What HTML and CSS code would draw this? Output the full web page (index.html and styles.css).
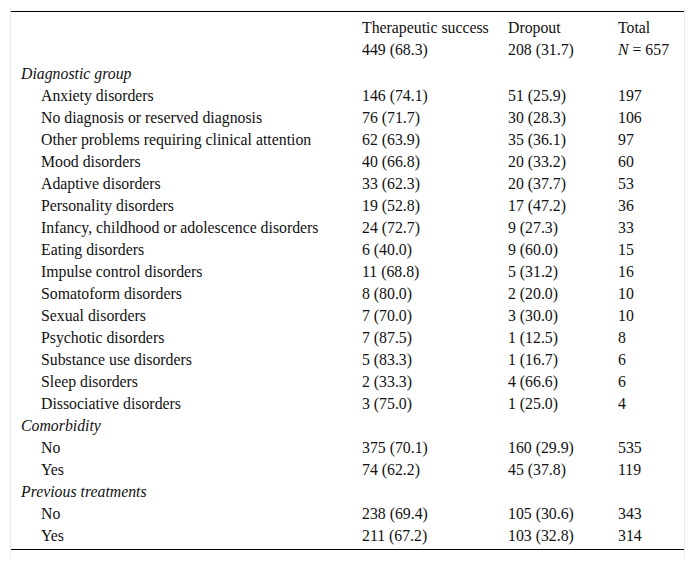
FILE: index.html
```html
<!DOCTYPE html>
<html>
<head>
<meta charset="utf-8">
<link rel="stylesheet" href="styles.css">
</head>
<body>
<div class="wrap">
<table class="data">
<colgroup>
<col class="c1"><col class="c2"><col class="c3"><col class="c4">
</colgroup>
<thead>
<tr>
<th></th>
<th>Therapeutic success<br>449 (68.3)</th>
<th>Dropout<br>208 (31.7)</th>
<th>Total<br><i>N</i> = 657</th>
</tr>
</thead>
<tbody>
<tr class="group"><td><i>Diagnostic group</i></td><td></td><td></td><td></td></tr>
<tr><td class="ind">Anxiety disorders</td><td>146 (74.1)</td><td>51 (25.9)</td><td>197</td></tr>
<tr><td class="ind">No diagnosis or reserved diagnosis</td><td>76 (71.7)</td><td>30 (28.3)</td><td>106</td></tr>
<tr><td class="ind">Other problems requiring clinical attention</td><td>62 (63.9)</td><td>35 (36.1)</td><td>97</td></tr>
<tr><td class="ind">Mood disorders</td><td>40 (66.8)</td><td>20 (33.2)</td><td>60</td></tr>
<tr><td class="ind">Adaptive disorders</td><td>33 (62.3)</td><td>20 (37.7)</td><td>53</td></tr>
<tr><td class="ind">Personality disorders</td><td>19 (52.8)</td><td>17 (47.2)</td><td>36</td></tr>
<tr><td class="ind">Infancy, childhood or adolescence disorders</td><td>24 (72.7)</td><td>9 (27.3)</td><td>33</td></tr>
<tr><td class="ind">Eating disorders</td><td>6 (40.0)</td><td>9 (60.0)</td><td>15</td></tr>
<tr><td class="ind">Impulse control disorders</td><td>11 (68.8)</td><td>5 (31.2)</td><td>16</td></tr>
<tr><td class="ind">Somatoform disorders</td><td>8 (80.0)</td><td>2 (20.0)</td><td>10</td></tr>
<tr><td class="ind">Sexual disorders</td><td>7 (70.0)</td><td>3 (30.0)</td><td>10</td></tr>
<tr><td class="ind">Psychotic disorders</td><td>7 (87.5)</td><td>1 (12.5)</td><td>8</td></tr>
<tr><td class="ind">Substance use disorders</td><td>5 (83.3)</td><td>1 (16.7)</td><td>6</td></tr>
<tr><td class="ind">Sleep disorders</td><td>2 (33.3)</td><td>4 (66.6)</td><td>6</td></tr>
<tr><td class="ind">Dissociative disorders</td><td>3 (75.0)</td><td>1 (25.0)</td><td>4</td></tr>
<tr class="group"><td><i>Comorbidity</i></td><td></td><td></td><td></td></tr>
<tr><td class="ind">No</td><td>375 (70.1)</td><td>160 (29.9)</td><td>535</td></tr>
<tr><td class="ind">Yes</td><td>74 (62.2)</td><td>45 (37.8)</td><td>119</td></tr>
<tr class="group"><td><i>Previous treatments</i></td><td></td><td></td><td></td></tr>
<tr><td class="ind">No</td><td>238 (69.4)</td><td>105 (30.6)</td><td>343</td></tr>
<tr><td class="ind">Yes</td><td>211 (67.2)</td><td>103 (32.8)</td><td>314</td></tr>
</tbody>
</table>
</div>
</body>
</html>
```
FILE: styles.css
```css
html, body {
  margin: 0;
  padding: 0;
  background: #fff;
}
body {
  font-family: "Liberation Serif", "Times New Roman", serif;
  font-size: 15.8px;
  color: #111;
}
.wrap {
  margin: 8px 10px 0 10px;
  padding: 3px 0 8px 0;
  border-left: 1px solid #ececec;
  border-right: 1px solid #ececec;
}
.data {
  width: 100%;
  border-collapse: collapse;
  table-layout: fixed;
  border-top: 1px solid #000;
  border-bottom: 1px solid #000;
}
.c1 { width: 341px; }
.c2 { width: 146px; }
.c3 { width: 110px; }
.c4 { width: auto; }
.data th,
.data td {
  padding: 0 0 0 10px;
  line-height: 22px;
  text-align: left;
  vertical-align: top;
  font-weight: normal;
  white-space: nowrap;
}
.data thead th {
  padding-top: 5px;
  padding-bottom: 2px;
}
.data td.ind {
  padding-left: 30px;
}
.data tbody tr:last-child td {
  padding-bottom: 2px;
}
```
